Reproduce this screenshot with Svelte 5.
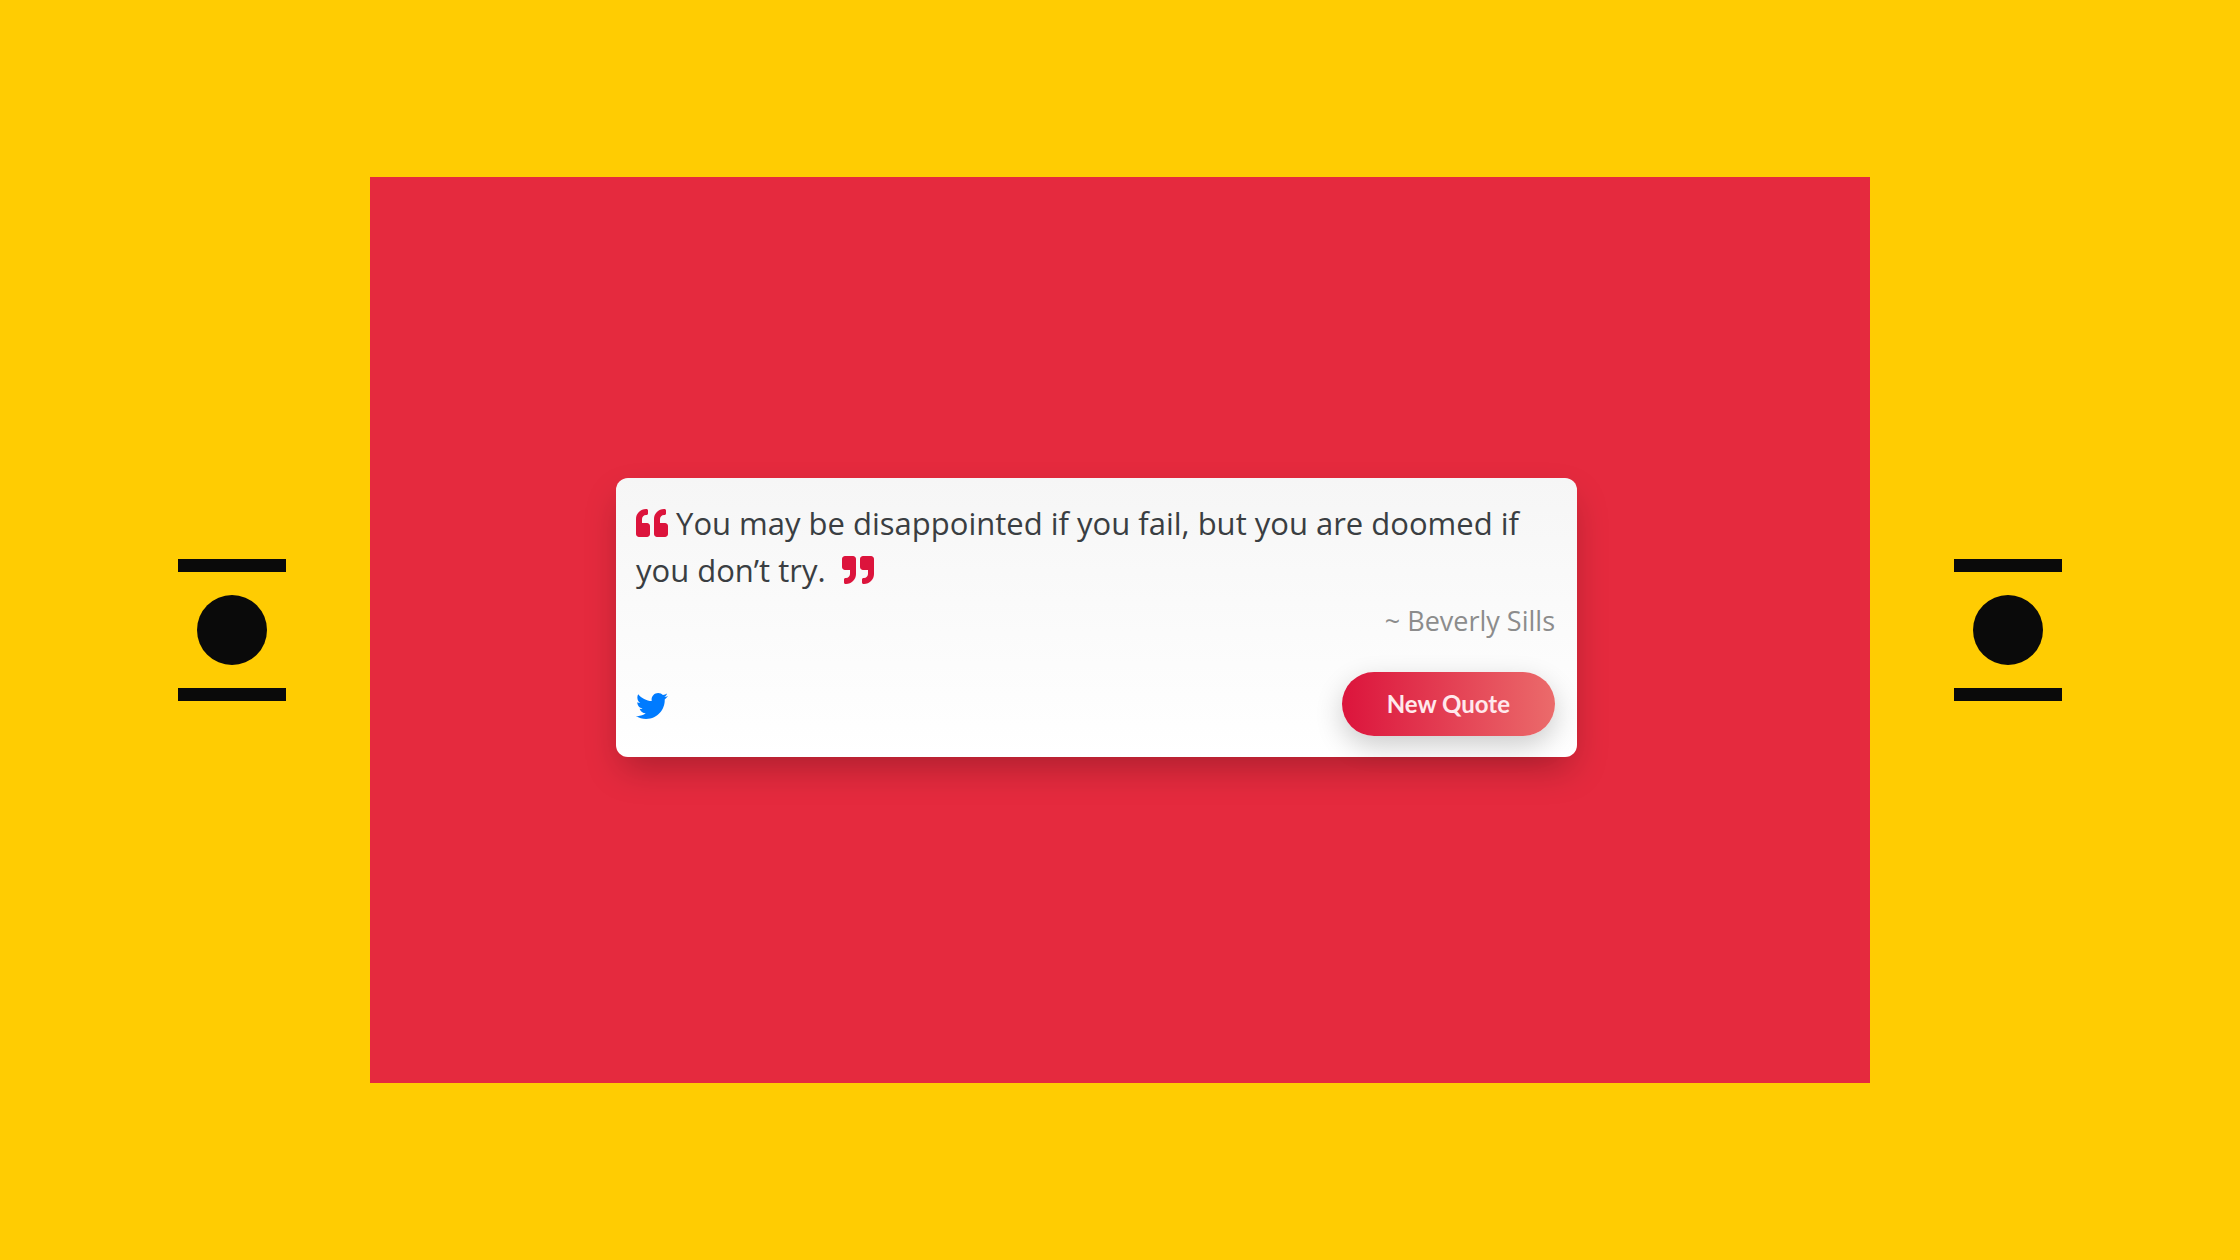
<script>
  const quotes = [
    {
      text: 'You may be disappointed if you fail, but you are doomed if you don’t try.',
      author: 'Beverly Sills'
    },
    {
      text: 'The best way to predict the future is to invent it.',
      author: 'Alan Kay'
    }
  ];

  let index = $state(0);
  const quote = $derived(quotes[index]);
  const shareUrl = $derived(
    'https://twitter.com/intent/tweet?text=' + encodeURIComponent(`${quote.text} ~ ${quote.author}`)
  );

  function next() {
    index = (index + 1) % quotes.length;
  }
</script>

{#snippet ornament()}
  <div class="ornament" aria-hidden="true">
    <span class="bar"></span>
    <span class="dot"></span>
    <span class="bar"></span>
  </div>
{/snippet}

<div class="page">
  {@render ornament()}

  <main class="stage">
    <article class="card">
      <blockquote class="quote">
        <svg class="mark" viewBox="0 0 512 512" aria-hidden="true"><path d="M464 256h-80v-64c0-35.300 28.700-64 64-64h8c13.300 0 24-10.700 24-24V56c0-13.300-10.700-24-24-24h-8c-88.400 0-160 71.600-160 160v240c0 26.500 21.500 48 48 48h128c26.500 0 48-21.500 48-48V304c0-26.500-21.500-48-48-48zm-288 0H96v-64c0-35.300 28.700-64 64-64h8c13.300 0 24-10.700 24-24V56c0-13.300-10.700-24-24-24h-8C71.600 32 0 103.600 0 192v240c0 26.500 21.500 48 48 48h128c26.500 0 48-21.500 48-48V304c0-26.500-21.500-48-48-48z" /></svg>
        {quote.text}
        <svg class="mark closing" viewBox="0 0 512 512" aria-hidden="true"><path d="M464 32H336c-26.500 0-48 21.500-48 48v128c0 26.500 21.500 48 48 48h80v64c0 35.300-28.700 64-64 64h-8c-13.300 0-24 10.700-24 24v48c0 13.300 10.700 24 24 24h8c88.400 0 160-71.600 160-160V80c0-26.500-21.500-48-48-48zm-288 0H48C21.500 32 0 53.500 0 80v128c0 26.500 21.500 48 48 48h80v64c0 35.300-28.700 64-64 64h-8c-13.300 0-24 10.700-24 24v48c0 13.300 10.700 24 24 24h8c88.400 0 160-71.600 160-160V80c0-26.500-21.500-48-48-48z" /></svg>
      </blockquote>
      <p class="author">~ {quote.author}</p>
      <footer class="actions">
        <a class="share" href={shareUrl} aria-label="Share on Twitter">
          <svg viewBox="0 0 512 512" aria-hidden="true"><path d="M459.370 151.716c.325 4.548.325 9.097.325 13.645 0 138.720-105.583 298.558-298.558 298.558-59.452 0-114.680-17.219-161.137-47.106 8.447.974 16.568 1.299 25.340 1.299 49.055 0 94.213-16.568 130.274-44.832-46.132-.975-84.792-31.188-98.112-72.772 6.498.974 12.995 1.624 19.818 1.624 9.421 0 18.843-1.300 27.614-3.573-48.081-9.747-84.143-51.980-84.143-102.985v-1.299c13.969 7.797 30.214 12.670 47.431 13.319-28.264-18.843-46.781-51.005-46.781-87.391 0-19.492 5.197-37.360 14.294-52.954 51.655 63.675 129.300 105.258 216.365 109.807-1.624-7.797-2.599-15.918-2.599-24.040 0-57.828 46.782-104.934 104.934-104.934 30.213 0 57.502 12.670 76.670 33.137 23.715-4.548 46.456-13.320 66.599-25.340-7.798 24.366-24.366 44.833-46.132 57.827 21.117-2.273 41.584-8.122 60.426-16.243-14.292 20.791-32.161 39.308-52.628 54.253z" /></svg>
        </a>
        <button class="next" type="button" onclick={next}>New Quote</button>
      </footer>
    </article>
  </main>

  {@render ornament()}
</div>

<style>
  :global(body) {
    margin: 0;
  }

  .page {
    box-sizing: border-box;
    min-height: 100vh;
    display: flex;
    align-items: stretch;
    gap: 84px;
    padding: 177px 178px;
    background: #ffcc02;
    font-family: 'Open Sans', 'Noto Sans', sans-serif;
  }

  .ornament {
    align-self: center;
    flex: none;
    display: flex;
    flex-direction: column;
    align-items: center;
    justify-content: space-between;
    width: 108px;
    height: 142px;
  }

  .bar {
    width: 100%;
    height: 13px;
    background: #0a0a0a;
  }

  .dot {
    width: 70px;
    height: 70px;
    border-radius: 50%;
    background: #0a0a0a;
  }

  .stage {
    flex: 1;
    display: flex;
    align-items: center;
    padding: 0 293px 26px 246px;
    background: #e52a3e;
  }

  .card {
    flex: 1;
    padding: 22px 22px 21px 20px;
    border-radius: 12px;
    background: linear-gradient(#f6f6f6, #ffffff);
    box-shadow: 0 16px 36px -6px rgba(0, 0, 0, 0.26);
  }

  .quote {
    margin: 0;
    color: #3a3e42;
    font-size: 31px;
    line-height: 47px;
  }

  .mark {
    width: 32px;
    height: 32px;
    fill: #dc143c;
    vertical-align: -4px;
  }

  .closing {
    margin-left: 8px;
  }

  .author {
    margin: 0;
    padding-top: 7px;
    color: #8c8c8c;
    font-size: 27px;
    line-height: 40px;
    text-align: right;
  }

  .actions {
    display: flex;
    align-items: end;
    justify-content: space-between;
    margin-top: 31px;
  }

  .share {
    padding-bottom: 14px;
  }

  .share svg {
    display: block;
    width: 32px;
    height: 32px;
    fill: #007bff;
  }

  .next {
    height: 64px;
    padding: 0 45px;
    border: 0;
    border-radius: 32px;
    background: linear-gradient(to right, #dc143c, #eb6b6b);
    box-shadow: 0 10px 28px rgba(0, 0, 0, 0.2);
    color: #ffe9ec;
    font-family: Lato, sans-serif;
    font-size: 24px;
    font-weight: 700;
    cursor: pointer;
  }
</style>
